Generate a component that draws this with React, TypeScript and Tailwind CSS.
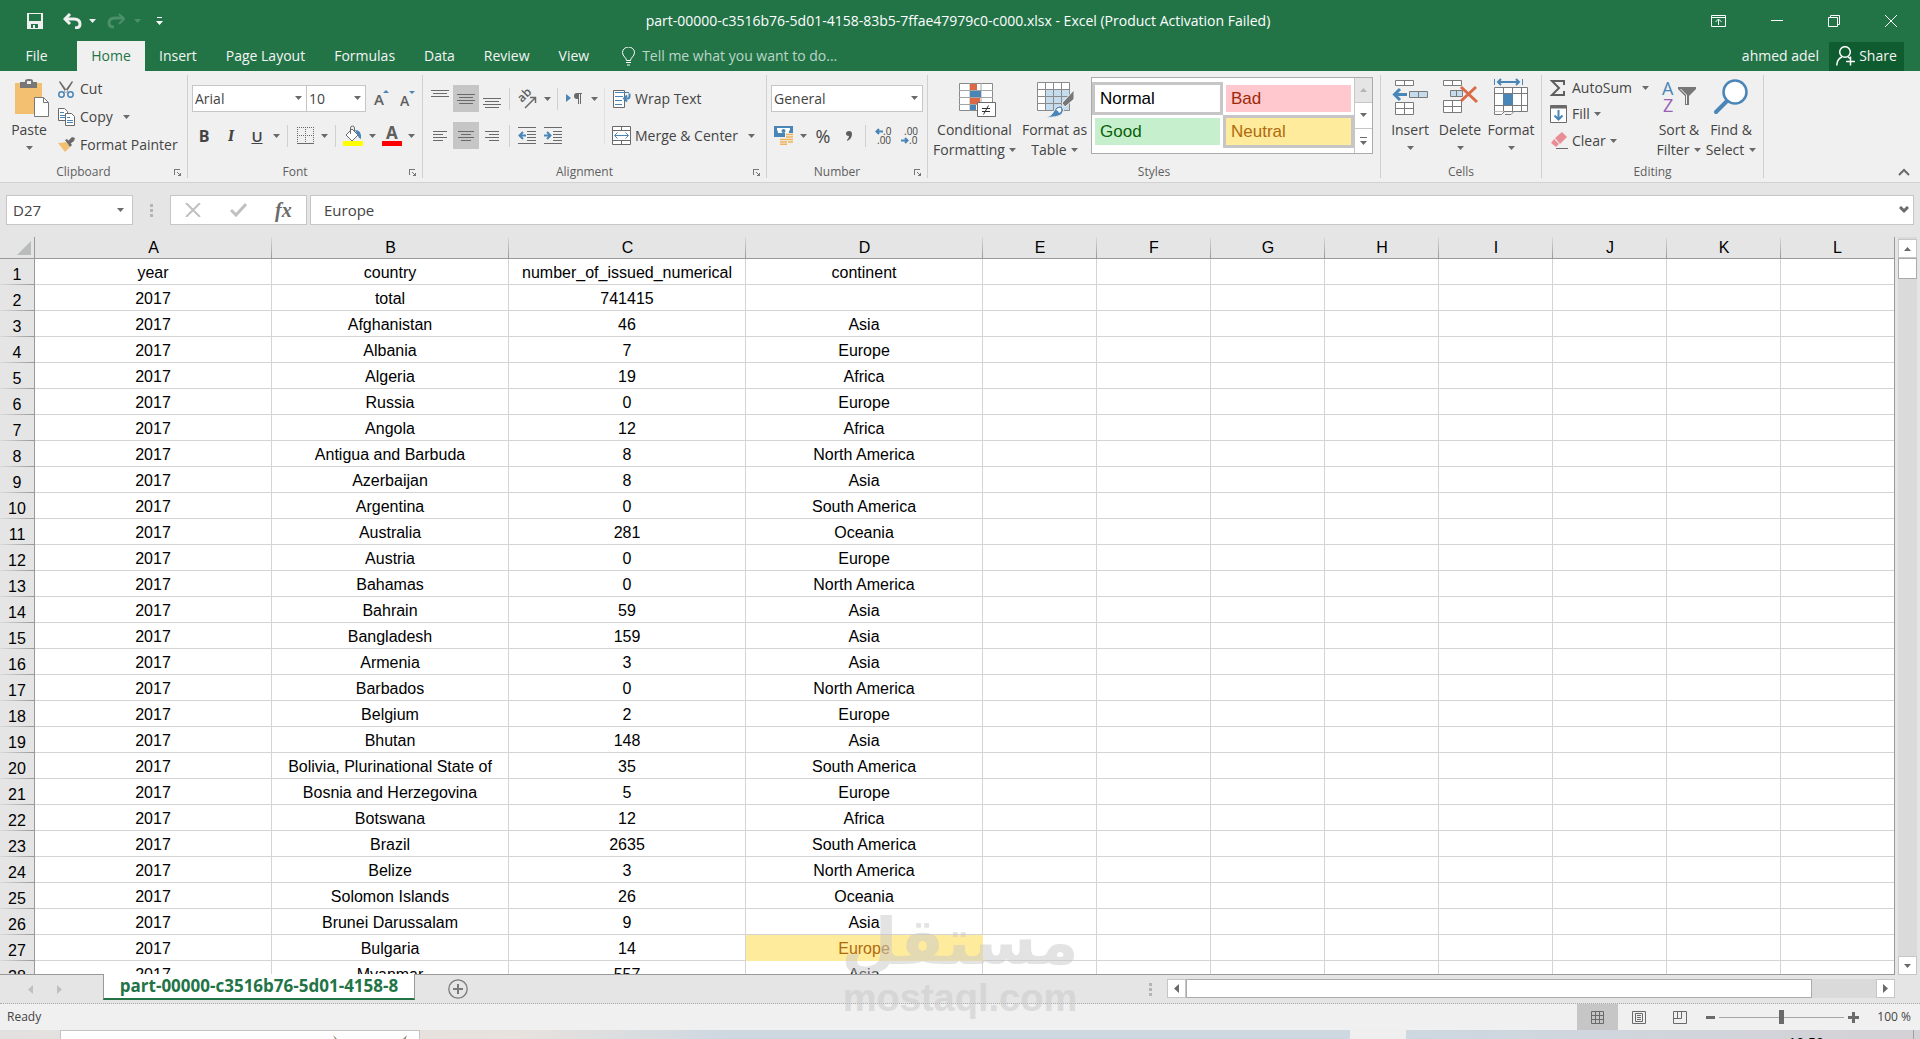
import { ReactNode, useState } from "react";
import clsx from "clsx";

type Row = [string, string, string, string];

const COLUMNS = ["A", "B", "C", "D", "E", "F", "G", "H", "I", "J", "K", "L"];

const ROWS: Row[] = [
   ["year", "country", "number_of_issued_numerical", "continent"],
   ["2017", "total", "741415", ""],
   ["2017", "Afghanistan", "46", "Asia"],
   ["2017", "Albania", "7", "Europe"],
   ["2017", "Algeria", "19", "Africa"],
   ["2017", "Russia", "0", "Europe"],
   ["2017", "Angola", "12", "Africa"],
   ["2017", "Antigua and Barbuda", "8", "North America"],
   ["2017", "Azerbaijan", "8", "Asia"],
   ["2017", "Argentina", "0", "South America"],
   ["2017", "Australia", "281", "Oceania"],
   ["2017", "Austria", "0", "Europe"],
   ["2017", "Bahamas", "0", "North America"],
   ["2017", "Bahrain", "59", "Asia"],
   ["2017", "Bangladesh", "159", "Asia"],
   ["2017", "Armenia", "3", "Asia"],
   ["2017", "Barbados", "0", "North America"],
   ["2017", "Belgium", "2", "Europe"],
   ["2017", "Bhutan", "148", "Asia"],
   ["2017", "Bolivia, Plurinational State of", "35", "South America"],
   ["2017", "Bosnia and Herzegovina", "5", "Europe"],
   ["2017", "Botswana", "12", "Africa"],
   ["2017", "Brazil", "2635", "South America"],
   ["2017", "Belize", "3", "North America"],
   ["2017", "Solomon Islands", "26", "Oceania"],
   ["2017", "Brunei Darussalam", "9", "Asia"],
   ["2017", "Bulgaria", "14", "Europe"],
   ["2017", "Myanmar", "557", "Asia"],
];

const TABS = ["Insert", "Page Layout", "Formulas", "Data", "Review", "View"];

const classes = {
   input: "h-[27px] w-full appearance-none rounded-none border border-[#c6c6c6] bg-white pl-[2px] text-[14px] leading-[20px] text-[#444] outline-none",
   row: "flex h-[27px] items-center whitespace-nowrap",
   iconButton: "flex h-[27px] w-[26px] shrink-0 items-center justify-center",
   bigButton: "flex shrink-0 flex-col items-center text-[14px] leading-[20px]",
   scrollButton: "flex shrink-0 items-center justify-center border border-[#c6c6c6] bg-white",
};

function Caret({ className = "text-[#6a6a6a]" }: { className?: string }) {
   return (
      <svg width="7" height="4" viewBox="0 0 7 4" className={clsx("shrink-0", className)} fill="currentColor">
         <path d="M0 0h7L3.500 4z" />
      </svg>
   );
}

function CaretButton({ label, className = "w-[20px]" }: { label: string; className?: string }) {
   return (
      <button aria-label={label} className={clsx("flex h-[27px] shrink-0 items-center justify-center", className)}>
         <Caret />
      </button>
   );
}

function Separator({ className = "" }: { className?: string }) {
   return <div className={clsx("h-[22px] w-px shrink-0 bg-[#d0d0d0]", className)} />;
}

/* horizontal strokes, each one is [x, y, width] */
function Lines({ data, size = 18 }: { data: number[][]; size?: number }) {
   return (
      <svg width={size} height="18" viewBox={`0 0 ${size} 18`} fill="#6a6a6a">
         {data.map(([x, y, w]) => (
            <rect key={y} x={x} y={y} width={w} height="1" />
         ))}
      </svg>
   );
}

function Group({
   title,
   className,
   launcher,
   children,
}: {
   title: string;
   className: string;
   launcher?: boolean;
   children: ReactNode;
}) {
   return (
      <section className={clsx("flex shrink-0 pt-[4px]", className)}>
         <div className="flex min-w-0 flex-1 flex-col">
            <div className="flex h-[87px] shrink-0">{children}</div>
            <div className="flex h-[20px] items-center">
               <h2
                  className={clsx(
                     "flex-1 text-center text-[12px] leading-[20px] text-[#5e5e5e]",
                     launcher && "pr-[7px]"
                  )}
               >
                  {title}
               </h2>
               {launcher && (
                  <button aria-label={`${title} settings`} className="mr-[6px] w-[7px]">
                     <svg width="7" height="7" viewBox="0 0 7 7" fill="none" stroke="#777" shapeRendering="crispEdges">
                        <path d="M.5 6V.5H6M3 3l3 3" />
                        <path d="M3.500 6.500h3v-3" />
                     </svg>
                  </button>
               )}
            </div>
         </div>
         <div className="mb-[4px] w-px bg-[#d0d0d0]" />
      </section>
   );
}

function TitleBar() {
   return (
      <header className="flex h-[41px] shrink-0 items-center bg-[#227447] text-white">
         <div className="flex flex-1 items-center pl-[27px]">
            <button aria-label="Save">
               <svg width="16" height="16" viewBox="0 0 16 16">
                  <path fill="#f0f0f0" fillRule="evenodd" d="M0 0h16v16H0zM2 1v7h12V1zM4 11v4h2v-3h2v3h3v-4z" />
               </svg>
            </button>
            <button aria-label="Undo" className="ml-[20px]">
               <svg width="19" height="16" viewBox="0 0 19 16" fill="none" stroke="#f0f0f0">
                  <path d="M7 1 2 6l5 5" strokeWidth="3" />
                  <path d="M2 6h9c4 0 6 2 6 5s-2 4-5 4" strokeWidth="3" />
               </svg>
            </button>
            <button aria-label="Undo list" className="ml-[7px]">
               <Caret className="text-[#f0f0f0]" />
            </button>
            <button aria-label="Redo" className="ml-[11px]" disabled>
               <svg width="19" height="16" viewBox="0 0 19 16" fill="none" stroke="#4b9069">
                  <path d="m12 1 5 5-5 5" strokeWidth="2" />
                  <path d="M17 5H8C4 5 2 7 2 10s2 4 5 4" strokeWidth="3" />
               </svg>
            </button>
            <button aria-label="Redo list" className="ml-[8px]" disabled>
               <Caret className="text-[#4b9069]" />
            </button>
            <button aria-label="Customize toolbar" className="ml-[15px] flex flex-col items-center gap-[3px]">
               <span className="h-px w-[5px] bg-white" />
               <Caret className="text-white" />
            </button>
         </div>
         <h1 className="pr-[8px] text-[14px] leading-[20px]">
            part-00000-c3516b76-5d01-4158-83b5-7ffae47979c0-c000.xlsx - Excel (Product Activation Failed)
         </h1>
         <div className="flex flex-1 items-center justify-end gap-[45px] pr-[23px]">
            <button aria-label="Ribbon display options">
               <svg width="15" height="12" viewBox="0 0 15 12" fill="none" stroke="#fff">
                  <path d="M.5.5h14v11H.5zM.5 2.500h14M7.500 10V4.500M4.500 7l3-3 3 3" />
               </svg>
            </button>
            <button aria-label="Minimize">
               <svg width="12" height="12" viewBox="0 0 12 12" stroke="#fff">
                  <path d="M0 5.500h12" />
               </svg>
            </button>
            <button aria-label="Restore">
               <svg width="12" height="12" viewBox="0 0 12 12" fill="none" stroke="#fff">
                  <path d="M.5 2.500h9v9h-9zM2.500 2.500v-2h9v9h-2" />
               </svg>
            </button>
            <button aria-label="Close">
               <svg width="12" height="12" viewBox="0 0 12 12" stroke="#fff">
                  <path d="m0 0 12 12M12 0 0 12" />
               </svg>
            </button>
         </div>
      </header>
   );
}

function TabBar() {
   return (
      <nav className="flex h-[30px] shrink-0 items-center bg-[#227447] text-[14px] leading-[20px] text-[#f4f4f4]">
         <button className="w-[77px] pr-[4px]">File</button>
         <button className="h-full w-[68px] bg-[#f0f0f0] text-[#227447]">Home</button>
         <div className="flex gap-[29px] pl-[14px]">
            {TABS.map((tab) => (
               <button key={tab}>{tab}</button>
            ))}
         </div>
         <label className="ml-[33px] flex flex-1 items-center gap-[7px]">
            <svg width="13" height="19" viewBox="0 0 13 19" fill="none" stroke="#fff">
               <path d="M4.500 13.500c0-3-4-4-4-8a6 5.500 0 0 1 12 0c0 4-4 5-4 8zM4 15.500h5M5 18h3" />
            </svg>
            <input
               aria-label="Tell me what you want to do"
               placeholder="Tell me what you want to do..."
               className="w-[300px] bg-transparent outline-none placeholder:text-[#bcd6c8]"
            />
         </label>
         <button className="mr-[10px]">ahmed adel</button>
         <button className="mr-[16px] flex h-[29px] w-[75px] items-center justify-center gap-[4px] bg-[#0e5c2f]">
            <svg width="19" height="20" viewBox="0 0 19 20" fill="none" stroke="#fff" strokeWidth="1.500">
               <circle cx="9" cy="6" r="5.300" />
               <path d="M.8 19.500c0-4 2-7 5-8.500M12 11l2 1.500M14.500 10.500v9M10 15.500h9" />
            </svg>
            Share
         </button>
      </nav>
   );
}

function ClipboardGroup() {
   return (
      <Group title="Clipboard" className="w-[188px]" launcher>
         <button className={clsx(classes.bigButton, "w-[58px] pt-[3px]")}>
            <svg width="36" height="40" viewBox="0 0 36 40" className="ml-[6px]">
               <path fill="#f3bf70" d="M1 5h27v31H1z" />
               <path fill="#777" d="M6 4h5V3q0-2 3-2h2q3 0 3 2v1h4v6H6z" />
               <path fill="#f0f0f0" d="M13 3h4v3h-4z" />
               <path fill="#fff" stroke="#777" d="M20.500 19.500h9l5 5v14h-14z" />
               <path fill="none" stroke="#777" d="M29.500 19.500v5h5" />
            </svg>
            <span className="mt-[2px]">Paste</span>
            <span className="flex h-[16px] items-center">
               <Caret />
            </span>
         </button>
         <div className="flex flex-col text-[14px] leading-[20px] whitespace-nowrap">
            <button className="flex h-[28px] items-center gap-[6px]">
               <svg width="16" height="19" viewBox="0 0 16 19" fill="none">
                  <path fill="#6a6a6a" d="m2 1 8 11-2 1L1 2zM14 1 6 12l2 1 7-11z" />
                  <circle cx="3.500" cy="14.500" r="2.700" stroke="#4a85b8" strokeWidth="1.500" />
                  <circle cx="12.500" cy="14.500" r="2.700" stroke="#4a85b8" strokeWidth="1.500" />
               </svg>
               Cut
            </button>
            <div className="flex">
               <button className="flex h-[28px] items-center gap-[5px]">
                  <svg width="17" height="18" viewBox="0 0 17 18" fill="#fff" stroke="#6a6a6a">
                     <path d="M.5.5h6l3 3v9h-9z" />
                     <path stroke="#4a85b8" d="M2 4.500h4M2 7.500h5M2 9.500h5" />
                     <path d="M7.500 5.500h6l3 3v9h-9z" />
                     <path stroke="#4a85b8" d="M9 9.500h3M9 12.500h6M9 14.500h6" />
                  </svg>
                  Copy
               </button>
               <CaretButton label="Copy options" className="w-[28px]" />
            </div>
            <button className="flex h-[28px] items-center gap-[5px]">
               <svg width="17" height="16" viewBox="0 0 17 16">
                  <path fill="#f3bf70" d="M0 6q5 0 8-1l4 5q-3 3-5 5z" />
                  <path fill="#6a6a6a" d="m7 3 2-1 5 6-2 2zM10 4l4-4 3 1-1 3-4 3z" />
               </svg>
               Format Painter
            </button>
         </div>
      </Group>
   );
}

function FontGroup() {
   return (
      <Group title="Font" className="w-[235px]" launcher>
         <div className="flex flex-col gap-[10px] pt-[10px] pl-[4px]">
            <div className={classes.row}>
               <div className="relative w-[115px]">
                  <select aria-label="Font" className={classes.input}>
                     <option>Arial</option>
                  </select>
                  <span className="pointer-events-none absolute top-[11px] right-[5px]">
                     <Caret />
                  </span>
               </div>
               <div className="relative -ml-px w-[60px]">
                  <select aria-label="Font size" className={classes.input}>
                     <option>10</option>
                  </select>
                  <span className="pointer-events-none absolute top-[11px] right-[5px]">
                     <Caret />
                  </span>
               </div>
               <button aria-label="Increase font size" className={clsx(classes.iconButton, "ml-[2px]")}>
                  <svg width="15" height="17" viewBox="0 0 15 17">
                     <text x="0" y="15" fontSize="15" fontWeight="600" fill="#5e5e5e" fontFamily="Open Sans, sans-serif">
                        A
                     </text>
                     <path fill="#4a85b8" d="m9 3 3-3 3 3z" />
                  </svg>
               </button>
               <button aria-label="Decrease font size" className={classes.iconButton}>
                  <svg width="15" height="17" viewBox="0 0 15 17">
                     <text x="0" y="16" fontSize="14" fontWeight="600" fill="#5e5e5e" fontFamily="Open Sans, sans-serif">
                        A
                     </text>
                     <path fill="#4a85b8" d="m9 1 3 3 3-3z" />
                  </svg>
               </button>
            </div>
            <div className={classes.row}>
               <button className="w-[24px] text-[16px] leading-[20px] font-bold">B</button>
               <button className="w-[30px] font-serif text-[17px] leading-[20px] font-bold italic">I</button>
               <button className="w-[22px] text-[15px] leading-[20px] font-semibold underline">U</button>
               <CaretButton label="Underline style" className="w-[17px]" />
               <Separator className="ml-[2px]" />
               <button aria-label="Borders" className={clsx(classes.iconButton, "ml-[4px]")}>
                  <svg width="17" height="17" viewBox="0 0 17 17" fill="none" stroke="#6a6a6a">
                     <path strokeDasharray="1 1" d="M0 .5h17M0 8.500h17M.5 0v16M8.500 0v16M16.500 0v16" />
                     <path d="M0 16.500h17" />
                  </svg>
               </button>
               <CaretButton label="Border style" className="w-[13px]" />
               <Separator className="ml-[4px]" />
               <button aria-label="Fill color" className={clsx(classes.iconButton, "ml-[4px]")}>
                  <svg width="20" height="20" viewBox="0 0 20 20" fill="none">
                     <path fill="#fff" stroke="#6a6a6a" d="m9 3 6 6-6 6-6-6z" />
                     <path stroke="#6a6a6a" d="M7.500 8V2q0-2 2-2t2 2v3" />
                     <path fill="#4a85b8" d="M12 4q7 0 6 9-2 0-3-3z" />
                     <path fill="#ffff00" d="M0 15h20v5H0z" />
                  </svg>
               </button>
               <CaretButton label="More fill colors" className="w-[13px]" />
               <button aria-label="Font color" className={classes.iconButton}>
                  <svg width="20" height="20" viewBox="0 0 20 20">
                     <text x="4" y="13" fontSize="17" fontWeight="700" fill="#5e5e5e" fontFamily="Open Sans, sans-serif">
                        A
                     </text>
                     <path fill="#ff0000" d="M0 15h20v5H0z" />
                  </svg>
               </button>
               <CaretButton label="More font colors" className="w-[12px]" />
            </div>
         </div>
      </Group>
   );
}

function AlignmentGroup() {
   return (
      <Group title="Alignment" className="w-[344px]" launcher>
         <div className="flex flex-col gap-[10px] pt-[10px] pl-[4px]">
            <div className={classes.row}>
               <button aria-label="Top align" className={classes.iconButton}>
                  <Lines data={[[0, 0, 18], [2, 3, 14], [0, 6, 18]]} />
               </button>
               <button aria-label="Middle align" className={clsx(classes.iconButton, "bg-[#c6c6c6]")}>
                  <Lines data={[[0, 4, 18], [2, 7, 14], [0, 10, 18], [2, 13, 14]]} />
               </button>
               <button aria-label="Bottom align" className={classes.iconButton}>
                  <Lines data={[[0, 8, 18], [2, 11, 14], [0, 14, 18], [2, 17, 14]]} />
               </button>
               <Separator className="ml-[4px]" />
               <button aria-label="Orientation" className={clsx(classes.iconButton, "ml-[4px]")}>
                  <svg width="20" height="20" viewBox="0 0 20 20" fill="none" stroke="#6a6a6a" strokeWidth="1.500">
                     <text
                        x="0"
                        y="0"
                        transform="translate(5 14) rotate(-45)"
                        fontSize="12"
                        stroke="none"
                        fill="#5e5e5e"
                        fontFamily="Open Sans, sans-serif"
                        fontWeight="600"
                     >
                        ab
                     </text>
                     <path d="M8 19 18 9M13 8.500h5.500V14" />
                  </svg>
               </button>
               <CaretButton label="Orientation options" className="w-[14px]" />
               <Separator className="ml-[3px]" />
               <button aria-label="Text direction" className={clsx(classes.iconButton, "ml-[3px]")}>
                  <svg width="16" height="12" viewBox="0 0 16 12">
                     <path fill="#4a85b8" d="m0 1 5 4-5 4z" />
                     <path fill="#6a6a6a" d="M10 0h6v1h-1v10h-1V1h-1v10h-1V6h-1a3 3 0 0 1 0-6z" />
                  </svg>
               </button>
               <CaretButton label="Text direction options" className="w-[14px]" />
            </div>
            <div className={classes.row}>
               <button aria-label="Align left" className={classes.iconButton}>
                  <Lines size={14} data={[[0, 4, 14], [0, 7, 10], [0, 10, 14], [0, 13, 10]]} />
               </button>
               <button aria-label="Center" className={clsx(classes.iconButton, "bg-[#c6c6c6]")}>
                  <Lines size={16} data={[[0, 4, 16], [3, 7, 10], [0, 10, 16], [3, 13, 10]]} />
               </button>
               <button aria-label="Align right" className={classes.iconButton}>
                  <Lines size={14} data={[[0, 4, 14], [4, 7, 10], [0, 10, 14], [4, 13, 10]]} />
               </button>
               <Separator className="ml-[4px]" />
               <button aria-label="Decrease indent" className={clsx(classes.iconButton, "ml-[4px]")}>
                  <svg width="18" height="17" viewBox="0 0 18 17" fill="none" stroke="#6a6a6a">
                     <path d="M0 .5h18M9 4.500h9M9 7.500h9M9 10.500h9M9 13.500h9M0 16.500h18" />
                     <path stroke="#4a85b8" strokeWidth="2" d="M8 8.500H1.500M5 5 1.500 8.500 5 12" />
                  </svg>
               </button>
               <button aria-label="Increase indent" className={classes.iconButton}>
                  <svg width="18" height="17" viewBox="0 0 18 17" fill="none" stroke="#6a6a6a">
                     <path d="M0 .5h18M9 4.500h9M9 7.500h9M9 10.500h9M9 13.500h9M0 16.500h18" />
                     <path stroke="#4a85b8" strokeWidth="2" d="M0 8.500h6.500M3 5l3.500 3.500L3 12" />
                  </svg>
               </button>
            </div>
         </div>
         <div className="mt-[13px] ml-[3px] h-[56px] w-px bg-[#e0e0e0]" />
         <div className="flex flex-col gap-[10px] pt-[10px] pl-[7px] text-[14px] leading-[20px]">
            <button className={clsx(classes.row, "gap-[4px]")}>
               <svg width="19" height="18" viewBox="0 0 19 18" fill="none">
                  <path fill="#fff" stroke="#6a6a6a" d="M1.500.5h11v17h-11z" />
                  <path stroke="#4a85b8" d="M3 2.500h14M3 6.500h8M3 10.500h7M3 14.500h7" />
                  <path stroke="#4a85b8" strokeWidth="2" d="M17.500 3.500v3q0 2-2 2H12M15 5.500l-3 3 3 3" />
               </svg>
               Wrap Text
            </button>
            <div className="flex">
               <button className={clsx(classes.row, "gap-[4px]")}>
                  <svg width="19" height="19" viewBox="0 0 19 19" fill="none">
                     <path fill="#fff" stroke="#6a6a6a" d="M.5.5h18v18H.5zM.5 4.500h18M.5 14.500h18M9.500.5v4M9.500 14.500v4" />
                     <path stroke="#4a85b8" d="M3 9.500h13M5.500 6.500l-3 3 3 3M13.500 6.500l3 3-3 3" />
                  </svg>
                  Merge &amp; Center
               </button>
               <CaretButton label="Merge options" className="w-[28px]" />
            </div>
         </div>
      </Group>
   );
}

function NumberGroup() {
   return (
      <Group title="Number" className="w-[161px]" launcher>
         <div className="flex flex-1 flex-col gap-[10px] pt-[10px] pr-[4px] pl-[4px]">
            <div className="relative h-[27px]">
               <select aria-label="Number format" className={classes.input}>
                  <option>General</option>
               </select>
               <span className="pointer-events-none absolute top-[11px] right-[5px]">
                  <Caret />
               </span>
            </div>
            <div className={classes.row}>
               <button aria-label="Accounting format" className={classes.iconButton}>
                  <svg width="20" height="19" viewBox="0 0 20 19" fill="none">
                     <path fill="#4a85b8" d="M0 0h19v11H0z" />
                     <path fill="#fff" d="M3 2h13v2q-2 1-1 3H4q0-2-1-3z" />
                     <circle cx="9.500" cy="5" r="2" fill="#4a85b8" />
                     <path fill="#f0f0f0" d="M11 7h9v12H5v-6h6z" />
                     <path
                        stroke="#f0b35c"
                        strokeWidth="1.500"
                        d="M12 8.500h7M12 11h7M12 13.500h7M14 16h5M6 13.500h6M6 16h7M6 18.200h7"
                     />
                  </svg>
               </button>
               <CaretButton label="Accounting options" className="w-[13px]" />
               <button className="w-[26px] text-center text-[18px] leading-[20px]">%</button>
               <button aria-label="Comma style" className="flex w-[25px] justify-center">
                  <svg width="6" height="10" viewBox="0 0 6 10" fill="#5e5e5e">
                     <path d="M1 9q2-2 2-4-3 0-3-2.500Q0 0 3 0t3 3q0 5-5 7z" />
                  </svg>
               </button>
               <Separator className="ml-[4px]" />
               <button aria-label="Increase decimal" className={clsx(classes.iconButton, "ml-[4px]")}>
                  <svg width="17" height="18" viewBox="0 0 17 18" fontSize="10" fontFamily="Open Sans, sans-serif">
                     <path fill="none" stroke="#4a85b8" strokeWidth="2" d="M8 4.500H1.500M4 2 1.500 4.500 4 7" />
                     <text x="8" y="8" fill="#444">.0</text>
                     <text x="2" y="17" fill="#444">.00</text>
                  </svg>
               </button>
               <button aria-label="Decrease decimal" className={classes.iconButton}>
                  <svg width="17" height="18" viewBox="0 0 17 18" fontSize="10" fontFamily="Open Sans, sans-serif">
                     <path fill="none" stroke="#4a85b8" strokeWidth="2" d="M0 13.500h6.500M4 11l2.500 2.500L4 16" />
                     <text x="3" y="8" fill="#444">.00</text>
                     <text x="8" y="17" fill="#444">.0</text>
                  </svg>
               </button>
            </div>
         </div>
      </Group>
   );
}

function StylesGroup() {
   const cell = "h-[33px] w-[131px] border-3 pl-[5px] text-left text-[17px] leading-[20px]";

   return (
      <Group title="Styles" className="w-[453px]">
         <button className={clsx(classes.bigButton, "w-[93px] pt-[7px]")}>
            <svg width="38" height="36" viewBox="0 0 38 36" fill="none" className="ml-[4px]">
               <path fill="#fff" stroke="#8a8a8a" d="M1.500 1.500h33v27h-33z" />
               <path stroke="#a5a5a5" d="M1 8.500h34M1 15.500h34M1 22.500h34M12 1v28M23 1v28" />
               <path fill="#dc6846" d="M12 2h7v6h-7zM12 16h10v6H12z" />
               <path fill="#4a85b8" d="M12 9h11v6H12zM12 23h6v5h-6z" />
               <path fill="#fff" stroke="#6a6a6a" d="M19.500 20.500h18v14h-18z" />
               <path stroke="#333" d="M24 26.500h8M24 29.500h8M30.500 23.500l-5 9" />
            </svg>
            <span className="mt-[2px]">Conditional</span>
            <span className="flex items-center gap-[4px]">
               Formatting <Caret />
            </span>
         </button>
         <button className={clsx(classes.bigButton, "w-[67px] pt-[7px]")}>
            <svg width="38" height="36" viewBox="0 0 38 36" fill="none" className="ml-[2px]">
               <path fill="#fff" d="M.5.5h32v28H.5z" />
               <path fill="#c5dcec" d="M9 8h24v21H9z" />
               <path stroke="#8a8a8a" d="M.5.5h32v28H.5zM.5 7.500h32M.5 14.500h32M.5 21.500h32M8.500 0v29M16.500 0v29M24.500 0v29" />
               <path fill="#777" stroke="#f0f0f0" d="m25 21 12-13v9l-9 8z" />
               <path fill="#4a85b8" stroke="#f0f0f0" d="M9 35q6-1 8-6 2-6 8-5 3 4 0 8-5 4-16 3z" />
               <path fill="#fff" d="M19 28q2-3 5-2 1 4-2 5l-1-2z" />
            </svg>
            <span className="mt-[2px]">Format as</span>
            <span className="flex items-center gap-[4px]">
               Table <Caret />
            </span>
         </button>
         <div className="mt-[2px] ml-[3px] flex h-[77px] w-[282px] border border-[#ababab] bg-white font-['Liberation_Sans',Arial,sans-serif]">
            <div className="grid flex-1 grid-cols-2 content-start pt-[4px]">
               <button className={clsx(cell, "border-[#c6c6c6] bg-white text-black")}>Normal</button>
               <button className={clsx(cell, "border-transparent bg-[#ffc7ce] bg-clip-padding text-[#9c2a06]")}>Bad</button>
               <button className={clsx(cell, "border-transparent bg-[#c6efce] bg-clip-padding text-[#0a6108]")}>Good</button>
               <button className={clsx(cell, "border-[#c6c6c6] bg-[#ffeb9c] text-[#b06a0c]")}>Neutral</button>
            </div>
            <div className="flex w-[18px] flex-col divide-y divide-[#c6c6c6] border-l border-[#c6c6c6]">
               <button aria-label="Previous styles" className="flex flex-1 items-center justify-center bg-[#e5e5e5]">
                  <Caret className="rotate-180 text-[#b5b5b5]" />
               </button>
               <button aria-label="Next styles" className="flex flex-1 items-center justify-center">
                  <Caret />
               </button>
               <button aria-label="More styles" className="flex flex-1 flex-col items-center justify-center gap-[3px]">
                  <span className="h-px w-[7px] bg-[#6a6a6a]" />
                  <Caret />
               </button>
            </div>
         </div>
      </Group>
   );
}

function CellsGroup() {
   return (
      <Group title="Cells" className="w-[161px]">
         <button className={clsx(classes.bigButton, "w-[56px] pt-[4px] pl-[2px]")}>
            <svg width="37" height="36" viewBox="0 0 37 36" fill="#fff" stroke="#7a7a7a">
               <path d="M3.500 1.500h18v5h-18zM12.500 1v6M3.500 23.500h18v12h-18zM12.500 23v12M3.500 29.500h18" />
               <path fill="#c5dcec" d="M17.500 12.500h18v6h-18zM26.500 12v7" />
               <path fill="none" stroke="#4a85b8" strokeWidth="3" d="M15 15.500H3M8 10l-5.500 5.500L8 21" />
            </svg>
            <span className="mt-[5px]">Insert</span>
            <span className="flex h-[16px] items-center">
               <Caret />
            </span>
         </button>
         <button className={clsx(classes.bigButton, "w-[46px] pt-[4px]")}>
            <svg width="36" height="36" viewBox="0 0 36 36" fill="#fff" stroke="#7a7a7a">
               <path d="M1.500 1.500h18v5h-18zM10.500 1v6M1.500 21.500h18v12h-18zM10.500 21v12M1.500 27.500h18" />
               <path fill="#c5dcec" d="M8.500 11.500h12v6h-12zM14.500 11v7" />
               <path fill="none" stroke="#dc6846" strokeWidth="3" d="m19 8 16 15M34 8 19 22" />
            </svg>
            <span className="mt-[5px]">Delete</span>
            <span className="flex h-[16px] items-center">
               <Caret />
            </span>
         </button>
         <button className={clsx(classes.bigButton, "w-[56px] pt-[4px]")}>
            <svg width="34" height="36" viewBox="0 0 34 36" fill="#fff" stroke="#7a7a7a">
               <path stroke="#4a85b8" d="M.5 0v6M28.500 0v6" />
               <path fill="none" stroke="#4a85b8" strokeWidth="2" d="M4 3h21M7 0 4 3l3 3M22 0l3 3-3 3" />
               <path d="M.5 8.500h33v24H.5zM9.500 8v24M18.500 8v24M27.500 8v24M.5 14.500h33M.5 26.500h33" />
               <path fill="#4a85b8" stroke="none" d="M9 15h10v11H9z" />
               <path d="M.5 32.500v3h7l3-3M11 35.500h6l3-3" />
            </svg>
            <span className="mt-[5px]">Format</span>
            <span className="flex h-[16px] items-center">
               <Caret />
            </span>
         </button>
      </Group>
   );
}

function EditingGroup() {
   return (
      <Group title="Editing" className="w-[222px]">
         <div className="flex w-[112px] flex-col pl-[8px] text-[14px] leading-[20px]">
            <div className="flex h-[25px] items-center">
               <button className="flex items-center gap-[6px]">
                  <svg width="16" height="16" viewBox="0 0 16 16" fill="none" stroke="#5e5e5e" strokeWidth="2">
                     <path d="M14 5V1H2l7 7-7 7h12v-4" />
                  </svg>
                  AutoSum
               </button>
               <CaretButton label="AutoSum options" className="w-[27px]" />
            </div>
            <div className={classes.row}>
               <button className="flex items-center gap-[5px]">
                  <svg width="17" height="18" viewBox="0 0 17 18" fill="#fff" stroke="#6a6a6a">
                     <path d="M.5.5h16v17H.5z" />
                     <path fill="#6a6a6a" d="M1 1h15v2H1z" />
                     <path fill="none" stroke="#4a85b8" strokeWidth="2" d="M8.500 5v9M4.500 10.500l4 4 4-4" />
                  </svg>
                  Fill
               </button>
               <CaretButton label="Fill options" className="w-[15px]" />
            </div>
            <div className={classes.row}>
               <button className="flex items-center gap-[4px]">
                  <svg width="18" height="17" viewBox="0 0 18 17">
                     <path fill="#e98d95" d="M5 6 12 0l5 5-7 7z" />
                     <path fill="#e98d95" d="m4 7 5 5-3 3-5-4z" />
                     <path stroke="#6a6a6a" d="M6 16.500h12" />
                  </svg>
                  Clear
               </button>
               <CaretButton label="Clear options" className="w-[15px]" />
            </div>
         </div>
         <button className={clsx(classes.bigButton, "w-[50px] pt-[4px]")}>
            <svg width="36" height="36" viewBox="0 0 36 36" fontFamily="Open Sans, sans-serif" fontSize="18">
               <text x="1" y="16" fill="#4a85b8">A</text>
               <text x="2" y="33" fill="#9b5fb5">Z</text>
               <path fill="#777" d="M17 8h18v2l-7 7v9h-4v-9l-7-7z" />
               <path stroke="#f0f0f0" d="m19.500 10 6 6v9" fill="none" />
            </svg>
            <span className="mt-[5px]">Sort &amp;</span>
            <span className="flex items-center gap-[5px]">
               Filter <Caret />
            </span>
         </button>
         <button className={clsx(classes.bigButton, "w-[54px] pt-[4px]")}>
            <svg width="36" height="36" viewBox="0 0 36 36" fill="none" stroke="#4a85b8">
               <path strokeWidth="4" strokeLinecap="round" d="M14 22 3 33" />
               <circle cx="22" cy="13" r="11.500" fill="#fff" strokeWidth="2.500" />
            </svg>
            <span className="mt-[5px]">Find &amp;</span>
            <span className="flex items-center gap-[5px]">
               Select <Caret />
            </span>
         </button>
      </Group>
   );
}

function Ribbon() {
   return (
      <div className="flex h-[112px] shrink-0 border-b border-[#d2d2d2] bg-[#f0f0f0] text-[#444] [&_svg]:shrink-0 [&_svg]:overflow-visible">
         <ClipboardGroup />
         <FontGroup />
         <AlignmentGroup />
         <NumberGroup />
         <StylesGroup />
         <CellsGroup />
         <EditingGroup />
         <button aria-label="Collapse the ribbon" className="mr-[10px] mb-[6px] ml-auto self-end">
            <svg width="12" height="8" viewBox="0 0 12 8" fill="none" stroke="#6a6a6a" strokeWidth="2">
               <path d="m1 7 5-5 5 5" />
            </svg>
         </button>
      </div>
   );
}

function Dots() {
   return (
      <div className="flex flex-col gap-[2px]">
         <span className="size-[3px] bg-[#b4b4b4]" />
         <span className="size-[3px] bg-[#b4b4b4]" />
         <span className="size-[3px] bg-[#b4b4b4]" />
      </div>
   );
}

function FormulaBar() {
   const [value, setValue] = useState("Europe");

   return (
      <div className="flex h-[54px] shrink-0 items-center pr-[6px] pl-[6px] text-[15px] leading-[20px] text-[#444]">
         <div className="flex h-[30px] w-[127px] items-center border border-[#c6c6c6] bg-white pr-[8px] pl-[6px]">
            <input aria-label="Name box" defaultValue="D27" className="w-[90px] flex-1 outline-none" />
            <Caret />
         </div>
         <div className="flex w-[37px] justify-center">
            <Dots />
         </div>
         <div className="flex h-[30px] w-[137px] items-center border border-[#c6c6c6] bg-white pl-[14px]">
            <button aria-label="Cancel" disabled>
               <svg width="16" height="14" viewBox="0 0 16 14" fill="none" stroke="#c0c0c0" strokeWidth="2">
                  <path d="m1 0 14 14M15 0 1 14" />
               </svg>
            </button>
            <button aria-label="Enter" className="ml-[29px]" disabled>
               <svg width="17" height="14" viewBox="0 0 17 14" fill="none" stroke="#c0c0c0" strokeWidth="3">
                  <path d="m1 7 5 5L16 1" />
               </svg>
            </button>
            <button
               aria-label="Insert function"
               className="ml-[28px] font-['Liberation_Serif',serif] text-[20px] leading-[20px] font-bold text-[#6a6a6a] italic"
            >
               fx
            </button>
         </div>
         <div className="ml-[3px] flex h-[30px] flex-1 items-center border border-[#c6c6c6] bg-white pr-[4px] pl-[13px]">
            <input
               aria-label="Formula"
               value={value}
               onChange={(e) => setValue(e.target.value)}
               className="min-w-0 flex-1 outline-none"
            />
            <button aria-label="Expand formula bar">
               <svg width="10" height="8" viewBox="0 0 10 8" fill="none" stroke="#6a6a6a" strokeWidth="3">
                  <path d="m1 1 4 4 4-4" />
               </svg>
            </button>
         </div>
      </div>
   );
}

function Sheet() {
   return (
      <div className="flex min-h-0 flex-1">
         <div className="min-w-0 flex-1 overflow-hidden border-r border-b border-[#999]">
            <table className="w-full table-fixed border-separate border-spacing-0 bg-white text-center font-['Liberation_Sans',Arial,sans-serif] text-[16px] leading-[20px] text-black">
               <colgroup>
                  <col className="w-[35px]" />
                  {COLUMNS.slice(0, 4).map((name) => (
                     <col key={name} className="w-[237px]" />
                  ))}
                  {COLUMNS.slice(4, 11).map((name) => (
                     <col key={name} className="w-[114px]" />
                  ))}
                  <col />
               </colgroup>
               <thead>
                  <tr className="h-[22px] bg-[#e5e5e5]">
                     <th aria-label="Select all" className="border-r border-b border-[#999] p-0">
                        <svg width="14" height="14" viewBox="0 0 14 14" className="ml-[17px]">
                           <path fill="#b8bcba" d="M14 0v14H0z" />
                        </svg>
                     </th>
                     {COLUMNS.map((name) => (
                        <th
                           key={name}
                           scope="col"
                           className="border-b border-[#999] bg-[linear-gradient(#dadada,#999)] bg-[length:1px_100%] bg-right bg-no-repeat p-0 pt-px leading-[20px] font-normal last:bg-none"
                        >
                           {name}
                        </th>
                     ))}
                  </tr>
               </thead>
               <tbody>
                  {ROWS.map((row, i) => (
                     <tr key={i} className="h-[26px]">
                        <th
                           scope="row"
                           className="border-r border-[#999] bg-[#e5e5e5] bg-[linear-gradient(to_right,#dadada,#999)] bg-[length:100%_1px] bg-bottom bg-no-repeat p-0 pt-[6px] leading-[20px] font-normal"
                        >
                           {i + 1}
                        </th>
                        {COLUMNS.map((name, j) => (
                           <td
                              key={name}
                              className={clsx(
                                 "border-r border-b p-0 pt-[2px] whitespace-nowrap last:border-r-0",
                                 i === 26 && j === 3
                                    ? "border-[#ffeb9c] bg-[#ffeb9c] text-[#b06a0c]"
                                    : "border-[#d4d4d4]"
                              )}
                           >
                              {row[j]}
                           </td>
                        ))}
                     </tr>
                  ))}
               </tbody>
            </table>
         </div>
         <div className="mr-[3px] ml-[3px] flex w-[19px] flex-col bg-[#dadada] pt-[2px]">
            <button aria-label="Scroll up" className={clsx(classes.scrollButton, "h-[19px]")}>
               <Caret className="rotate-180 text-[#6a6a6a]" />
            </button>
            <div className="h-[21px] border border-[#ababab] bg-white" />
            <button aria-label="Scroll down" className={clsx(classes.scrollButton, "mt-auto h-[19px]")}>
               <Caret />
            </button>
         </div>
      </div>
   );
}

function SheetTabs() {
   return (
      <div className="flex h-[29px] shrink-0 items-start border-b border-dotted border-[#ababab] pr-[25px]">
         <div className="flex h-full w-[103px] items-center gap-[24px] pl-[28px]">
            <button aria-label="Previous sheet" disabled>
               <svg width="5" height="9" viewBox="0 0 5 9" fill="#c0c0c0">
                  <path d="M5 0v9L0 4.500z" />
               </svg>
            </button>
            <button aria-label="Next sheet" disabled>
               <svg width="5" height="9" viewBox="0 0 5 9" fill="#c0c0c0">
                  <path d="M0 0v9l5-4.500z" />
               </svg>
            </button>
         </div>
         {/* the active tab covers the bottom edge of the grid */}
         <button className="relative -mt-px h-[26px] w-[312px] border-x border-b-2 border-x-[#999] border-b-[#227447] bg-white text-[17px] leading-[20px] font-bold whitespace-nowrap text-[#227447]">
            part-00000-c3516b76-5d01-4158-8
         </button>
         <button aria-label="New sheet" className="mt-[4px] ml-[33px]">
            <svg width="20" height="20" viewBox="0 0 20 20" fill="none" stroke="#7a7a7a">
               <circle cx="10" cy="10" r="9.200" strokeWidth="1.300" />
               <path strokeWidth="2" d="M5 10h10M10 5v10" />
            </svg>
         </button>
         <div className="ml-auto flex h-full items-center pr-[15px]">
            <Dots />
         </div>
         <div className="mt-[4px] flex h-[19px] w-[728px] bg-[#dadada]">
            <button aria-label="Scroll left" className={clsx(classes.scrollButton, "w-[19px]")}>
               <svg width="5" height="9" viewBox="0 0 5 9" fill="#6a6a6a">
                  <path d="M5 0v9L0 4.500z" />
               </svg>
            </button>
            <div className="w-[86%] border border-[#ababab] bg-white" />
            <button aria-label="Scroll right" className={clsx(classes.scrollButton, "ml-auto w-[19px]")}>
               <svg width="5" height="9" viewBox="0 0 5 9" fill="#6a6a6a">
                  <path d="M0 0v9l5-4.500z" />
               </svg>
            </button>
         </div>
      </div>
   );
}

function StatusBar() {
   const [zoom, setZoom] = useState(100);

   return (
      <footer className="flex h-[26px] shrink-0 items-center bg-[#f0f0f0] pr-[9px] pl-[7px] text-[12px] leading-[20px] text-[#444]">
         <span>Ready</span>
         <div className="ml-auto flex h-full">
            <button aria-label="Normal view" className="flex w-[41px] items-center justify-center bg-[#c6c6c6]">
               <svg width="13" height="13" viewBox="0 0 13 13" fill="none" stroke="#6a6a6a">
                  <path d="M.5.5h12v12H.5zM.5 4.500h12M.5 8.500h12M4.500.5v12M8.500.5v12" />
               </svg>
            </button>
            <button aria-label="Page layout view" className="flex w-[41px] items-center justify-center">
               <svg width="14" height="13" viewBox="0 0 14 13" fill="none" stroke="#6a6a6a">
                  <path d="M.5.5h13v12H.5zM3.500 2.500h7v8h-7zM5 4.500h4M5 6.500h4M5 8.500h4" />
               </svg>
            </button>
            <button aria-label="Page break preview" className="flex w-[41px] items-center justify-center">
               <svg width="14" height="13" viewBox="0 0 14 13" fill="none" stroke="#6a6a6a">
                  <path d="M.5.5h13v12H.5zM.5 7.500h8V.5M4.500.5v7" />
               </svg>
            </button>
         </div>
         <button aria-label="Zoom out" className="ml-[6px]">
            <svg width="9" height="3" viewBox="0 0 9 3">
               <path fill="#6a6a6a" d="M0 0h9v3H0z" />
            </svg>
         </button>
         <input
            type="range"
            aria-label="Zoom"
            min={0}
            max={200}
            value={zoom}
            onChange={(e) => setZoom(Number(e.target.value))}
            className="mx-[4px] h-[14px] w-[125px] appearance-none bg-[linear-gradient(#a6a6a6,#a6a6a6)] bg-[length:100%_1px] bg-center bg-no-repeat [&::-webkit-slider-thumb]:h-[14px] [&::-webkit-slider-thumb]:w-[5px] [&::-webkit-slider-thumb]:appearance-none [&::-webkit-slider-thumb]:bg-[#6a6a6a]"
         />
         <button aria-label="Zoom in">
            <svg width="11" height="11" viewBox="0 0 11 11">
               <path fill="#6a6a6a" d="M4 0h3v4h4v3H7v4H4V7H0V4h4z" />
            </svg>
         </button>
         <button className="ml-[16px] w-[36px] text-right whitespace-nowrap">{zoom} %</button>
      </footer>
   );
}

function Taskbar() {
   return (
      <div className="flex h-[9px] shrink-0 overflow-hidden bg-[linear-gradient(to_right,#e3e1df_0%,#e8e2de_27%,#cdd8e1_38%,#cdd8e1_73%,#d4d2d6_100%)]">
         <div className="ml-[60px] flex h-[40px] w-[360px] border border-[#c3c3c3] bg-white pl-[272px]">
            <svg width="76" height="10" viewBox="0 0 76 10" fill="#9a8468">
               <path d="m0 4 6 6h-3zM74 4l-6 6h4z" />
            </svg>
         </div>
         <div className="ml-auto h-full w-[56px] bg-[#efefef]" />
         <div className="h-[30px] w-[508px] border-r border-[#a0a0a0] pt-[3px] pr-[89px] text-right text-[14px] leading-[20px] text-black">
            10:50
         </div>
         <div className="w-[6px]" />
      </div>
   );
}

export default function App() {
   return (
      <main className="relative flex h-screen flex-col overflow-hidden bg-[#e5e5e5] font-['Open_Sans','Segoe_UI',sans-serif]">
         <TitleBar />
         <TabBar />
         <Ribbon />
         <FormulaBar />
         <Sheet />
         <SheetTabs />
         <StatusBar />
         <Taskbar />
         <div className="pointer-events-none absolute inset-x-0 bottom-[21px] flex flex-col items-center font-bold text-[#c8c8c8] opacity-50">
            <span className="font-['DejaVu_Sans',sans-serif] text-[65px] leading-[72px]" lang="ar">
               مستقل
            </span>
            <span className="font-['Liberation_Sans',Arial,sans-serif] text-[38px] leading-[40px]">mostaql.com</span>
         </div>
      </main>
   );
}
